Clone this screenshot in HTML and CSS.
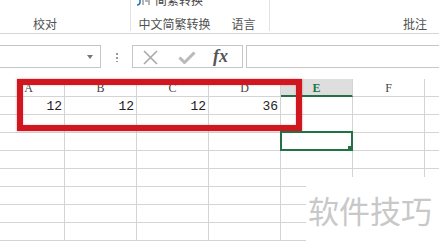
FILE: index.html
```html
<!DOCTYPE html>
<html lang="zh-CN">
<head>
  <meta charset="UTF-8">
  <title>审阅</title>
  <meta name="viewport" content="width=device-width, initial-scale=1.0"/>
  <link rel="stylesheet" href="styles.css">
</head>
<body>
  <div class="ribbon">
    <div class="group g-proof"><span class="label">校对</span></div>
    <div class="sep"></div>
    <div class="group g-conv">
      <div class="btn-top">
        <svg class="ico-conv" width="13" height="12" viewBox="0 0 13 12">
          <path d="M3 0v8c0 2-1 3-3 3" stroke="#2f73c0" stroke-width="1.6" fill="none"/>
          <path d="M6 1v10M6 1h6v10M8 4h3M8 7h3" stroke="#6b6b6b" stroke-width="1" fill="none"/>
        </svg>
        <span>简繁转换</span>
      </div>
      <span class="label">中文简繁转换</span>
    </div>
    <div class="group g-lang"><span class="label">语言</span></div>
    <div class="sep"></div>
    <div class="group g-comment"><span class="label">批注</span></div>
  </div>

  <div class="fbar">
    <div class="namebox"><span class="arrow"></span></div>
    <div class="grip"><span class="dots"></span></div>
    <div class="fbtns">
      <svg class="ico-x" width="15" height="15" viewBox="0 0 15 15">
        <path d="M1 1L14 14M14 1L1 14" stroke="#a9a9a9" stroke-width="1.6"/>
      </svg>
      <svg class="ico-ok" width="18" height="13" viewBox="0 0 18 13">
        <path d="M1.5 6.5l5 5L16.5 1.5" stroke="#b9b9b9" stroke-width="3" fill="none"/>
      </svg>
      <span class="fx">fx</span>
    </div>
    <div class="finput"></div>
  </div>

  <div class="sheet">
    <div class="hd">A</div><div class="hd">B</div><div class="hd">C</div><div class="hd">D</div><div class="hd hd-sel">E</div><div class="hd">F</div><div class="hd"></div>

    <div class="c num">12</div><div class="c num">12</div><div class="c num">12</div><div class="c num">36</div><div class="c"></div><div class="c"></div><div class="c"></div>
    <div class="c"></div><div class="c"></div><div class="c"></div><div class="c"></div><div class="c"></div><div class="c"></div><div class="c"></div>
    <div class="c"></div><div class="c"></div><div class="c"></div><div class="c"></div><div class="c active"><span class="handle"></span></div><div class="c"></div><div class="c"></div>
    <div class="c"></div><div class="c"></div><div class="c"></div><div class="c"></div><div class="c"></div><div class="c"></div><div class="c"></div>
    <div class="c"></div><div class="c"></div><div class="c"></div><div class="c"></div><div class="c"></div><div class="c"></div><div class="c"></div>
    <div class="c"></div><div class="c"></div><div class="c"></div><div class="c"></div><div class="c"></div><div class="c"></div><div class="c"></div>
    <div class="c"></div><div class="c"></div><div class="c"></div><div class="c"></div><div class="c"></div><div class="c"></div><div class="c"></div>
    <div class="c"></div><div class="c"></div><div class="c"></div><div class="c"></div><div class="c"></div><div class="c"></div><div class="c"></div>
  </div>

  <!-- red marker drawn over the first rows -->
  <div class="mark"></div>

  <div class="watermark">软件技巧</div>
</body>
</html>
```

FILE: styles.css
```css
body {
  margin: 0;
  background: #fff;
  font-family: "Noto Sans CJK SC", "Noto Sans", sans-serif;
  color: #505050;
  width: 439px;
  height: 244px;
  overflow: hidden;
  position: relative;
}

/* ribbon */
.ribbon {
  display: flex;
  height: 33px;
  border-bottom: 1px solid #d6d6d6;
  overflow: hidden;
}
.group {
  display: flex;
  flex-direction: column;
}
.label {
  margin-top: auto;
  padding-bottom: 1px;
  font-size: 12px;
  line-height: 16px;
  white-space: nowrap;
}
.sep {
  width: 1px;
  height: 31px;
  background: #e1e1e1;
}
.g-proof {
  width: 130px;
  padding-left: 33px;
  box-sizing: border-box;
}
.g-conv {
  width: 87px;
  text-align: center;
}
.btn-top {
  display: flex;
  align-items: center;
  gap: 5px;
  margin-top: -8px;
  padding-left: 6px;
  font-size: 12px;
  line-height: 16px;
  color: #444;
}
.g-lang {
  width: 51px;
  text-align: center;
}
.g-comment {
  padding-left: 133px;
}

/* formula bar */
.fbar {
  display: flex;
  height: 23px;
  margin-top: 11px;
}
.namebox {
  width: 102px;
  margin-left: -1px;
  border: 1px solid #c6c6c6;
  box-sizing: border-box;
  display: flex;
  justify-content: flex-end;
  align-items: center;
  padding-right: 7px;
}
.arrow {
  width: 0;
  height: 0;
  border-left: 3px solid transparent;
  border-right: 3px solid transparent;
  border-top: 4px solid #777;
  margin-top: 1px;
}
.grip {
  width: 31px;
  display: flex;
  justify-content: center;
  align-items: center;
}
.dots {
  width: 2px;
  height: 10px;
  background: radial-gradient(circle, #9a9a9a 0.8px, transparent 1px) 0 0 / 2px 4px;
  margin-top: 1px;
}
.fbtns {
  width: 111px;
  border: 1px solid #c6c6c6;
  box-sizing: border-box;
  display: flex;
  align-items: center;
  padding-left: 10px;
}
.ico-x {
  margin-top: 1px;
}
.ico-ok {
  margin-left: 20px;
  margin-top: 2px;
}
.fx {
  margin-left: 17px;
  font-family: "Liberation Serif", "DejaVu Serif", serif;
  font-style: italic;
  font-weight: bold;
  font-size: 18px;
  line-height: 20px;
  color: #555;
  margin-top: -1px;
}
.finput {
  flex: 1;
  margin-left: 3px;
  margin-right: -5px;
  border: 1px solid #c6c6c6;
}

/* sheet grid */
.sheet {
  display: grid;
  grid-template-columns: repeat(7, 72px);
  grid-template-rows: 18px;
  grid-auto-rows: 18px;
  margin-top: 11px;
  margin-left: -7px;
}
.hd, .c {
  border-right: 1px solid #d4d4d4;
  border-bottom: 1px solid #d4d4d4;
  box-sizing: border-box;
}
.hd {
  text-align: center;
  font-family: "Liberation Serif", "DejaVu Serif", serif;
  font-size: 12px;
  line-height: 17px;
  padding-top: 1px;
  color: #444;
}
.hd-sel {
  background: #dedede;
  color: #217346;
  font-weight: bold;
  border-bottom: 2px solid #217346;
  line-height: 16px;
}
.num {
  text-align: right;
  padding-right: 2px;
  padding-top: 2px;
  font-family: "Liberation Mono", "DejaVu Sans Mono", monospace;
  font-size: 13px;
  line-height: 15px;
  color: #222;
}
.active {
  position: relative;
}
.active::after {
  content: "";
  position: absolute;
  top: -2px;
  left: -1px;
  right: -1px;
  bottom: -1px;
  border: 2px solid #217346;
  z-index: 1;
}
.handle {
  position: absolute;
  right: -1px;
  bottom: -1px;
  width: 5px;
  height: 5px;
  background: #217346;
  z-index: 2;
}

/* overlays */
.mark {
  position: absolute;
  left: 17px;
  top: 79px;
  width: 285px;
  height: 52px;
  border: 6px solid #d0161e;
  box-sizing: border-box;
  box-shadow: 0 0 2px rgba(208, 22, 30, 0.5), inset 0 0 2px rgba(208, 22, 30, 0.4);
}
.watermark {
  position: absolute;
  left: 306px;
  top: 177px;
  right: 0;
  bottom: 0;
  background: #fff;
  padding: 17px 0 0 2px;
  font-size: 31px;
  line-height: 31px;
  color: #c8c8c8;
  white-space: nowrap;
}
```
